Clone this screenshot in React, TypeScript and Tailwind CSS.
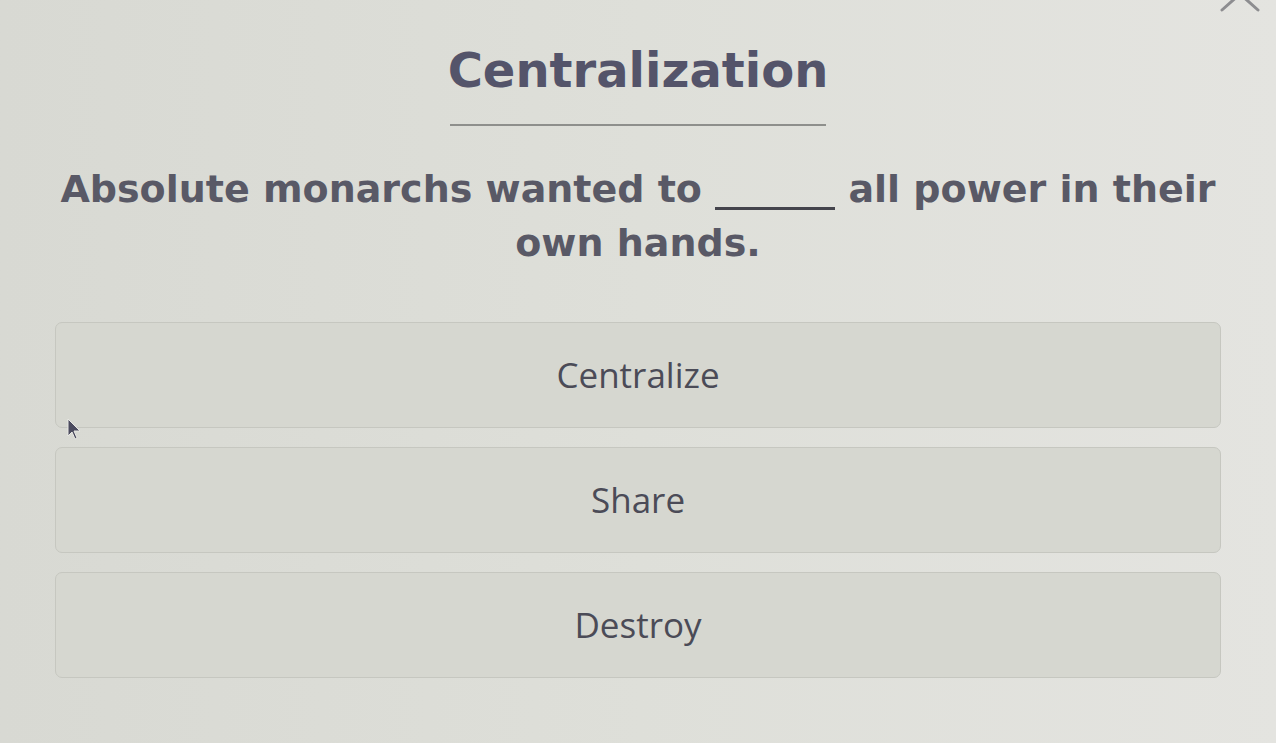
import React from 'react';

const options = ['Centralize', 'Share', 'Destroy'];

const App: React.FC = () => {
  return (
    <div className="relative w-[1276px] h-[743px] overflow-hidden bg-gradient-to-r from-[#d8d9d3] via-[#dedfd9] to-[#e4e4e0]">
      {/* partial chevron at top edge */}
      <svg className="absolute right-[14px] top-[-14px]" width="44" height="28" viewBox="0 0 44 28">
        <path d="M4 24 L22 8 L40 24" fill="none" stroke="#8d8d90" strokeWidth="3" strokeLinecap="round" />
      </svg>

      <div className="flex flex-col items-center pt-[38px]">
        <h1
          className="text-[48px] leading-[64px] font-bold text-[#54546a]"
          style={{ fontFamily: '"DejaVu Sans", Verdana, sans-serif' }}
        >
          Centralization
        </h1>
        <div className="mt-[22px] w-[376px] h-[2px] bg-[#8e8f8c]" />

        <p
          className="mt-[36px] w-[1240px] text-center text-[38px] leading-[54px] font-bold text-[#595966]"
          style={{ fontFamily: '"DejaVu Sans", Verdana, sans-serif' }}
        >
          Absolute monarchs wanted to <span className="inline-block w-[120px] border-b-[3px] border-[#44444c] leading-[36px] align-baseline">&nbsp;</span> all power in their
          <br />
          own hands.
        </p>
      </div>

      <div className="mt-[52px] px-[55px] flex flex-col gap-[19px]">
        {options.map(opt => (
          <button
            key={opt}
            className="h-[106px] w-full rounded-[7px] border border-[#c6c7c0] bg-[#d6d7d0] flex items-center justify-center text-[35px] text-[#4b4b57]"
            style={{ fontFamily: '"Open Sans", "Noto Sans", sans-serif' }}
          >
            {opt}
          </button>
        ))}
      </div>

      {/* mouse pointer */}
      <svg className="absolute left-[66px] top-[418px]" width="16" height="22" viewBox="0 0 16 22">
        <path d="M2 1 L2 18 L6 14 L9 21 L11 20 L8 13 L14 13 Z" fill="#4b4b5e" stroke="#e8e8e4" strokeWidth="1" />
      </svg>
    </div>
  );
};

export default App;
